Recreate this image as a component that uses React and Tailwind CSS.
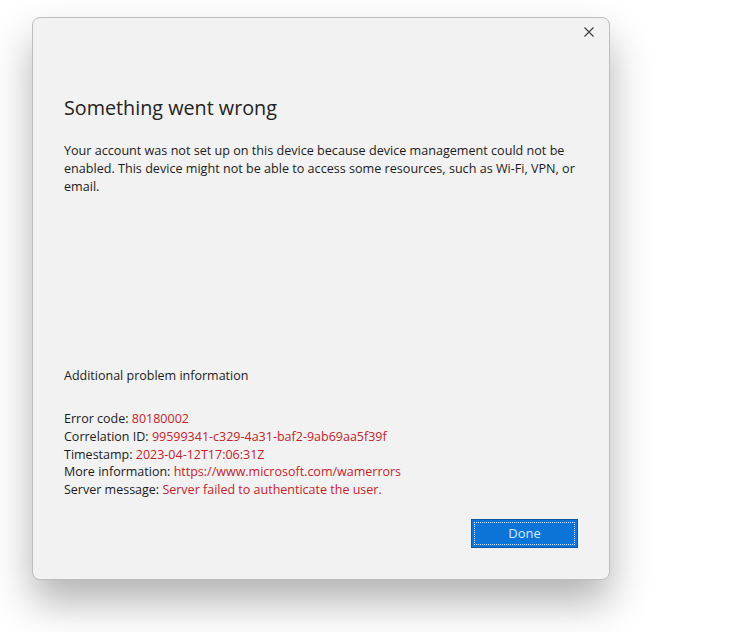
import React from "react";

export default function App() {
  const rows = [
    ["Error code: ", "80180002"],
    ["Correlation ID: ", "99599341-c329-4a31-baf2-9ab69aa5f39f"],
    ["Timestamp: ", "2023-04-12T17:06:31Z"],
    ["More information: ", "https://www.microsoft.com/wamerrors"],
    ["Server message: ", "Server failed to authenticate the user."],
  ];
  return (
    <div className="w-[752px] h-[632px] bg-white pl-[32px] pt-[17px] overflow-hidden" style={{ fontFamily: '"Open Sans", "Noto Sans", sans-serif' }}>
      <div className="relative w-[578px] h-[563px] rounded-[8px] bg-[#f2f2f2] border border-[#bdbdbd] shadow-[0_22px_40px_rgba(0,0,0,0.3)] flex flex-col pl-[31px] pr-[20px] text-[#1b1b1b]">
        <button className="absolute top-[6px] right-[12px] w-[16px] h-[16px] flex items-center justify-center">
          <svg width="10" height="10" viewBox="0 0 10 10" fill="none" stroke="#3a3a3a" strokeWidth="1.1">
            <path d="M0.5 0.5 L9.5 9.5 M9.5 0.5 L0.5 9.5" />
          </svg>
        </button>
        <h1 className="mt-[76px] text-[19.75px] leading-[28px] font-normal text-[#222]">Something went wrong</h1>
        <p className="mt-[20px] text-[12.6px] leading-[18px] whitespace-nowrap">
          Your account was not set up on this device because device management could not be
          <br />
          enabled. This device might not be able to access some resources, such as Wi-Fi, VPN, or
          <br />
          email.
        </p>
        <div className="mt-[171px] text-[12.5px] leading-[18px]">Additional problem information</div>
        <div className="mt-[25px] text-[12.5px] leading-[17.75px] flex flex-col">
          {rows.map(([k, v]) => (
            <div key={k}>
              {k}
              <span className="text-[#c5222b]">{v}</span>
            </div>
          ))}
        </div>
        <div className="mt-[20px] flex justify-end pr-[11px]">
          <button className="w-[107px] h-[29px] bg-[#0b74d8] border border-[#0b58a0] p-[2px]">
            <div className="w-full h-full border border-dotted border-[#d8e8f8] flex items-center justify-center text-[13px] text-[#d6e9fb]">
              Done
            </div>
          </button>
        </div>
      </div>
    </div>
  );
}
